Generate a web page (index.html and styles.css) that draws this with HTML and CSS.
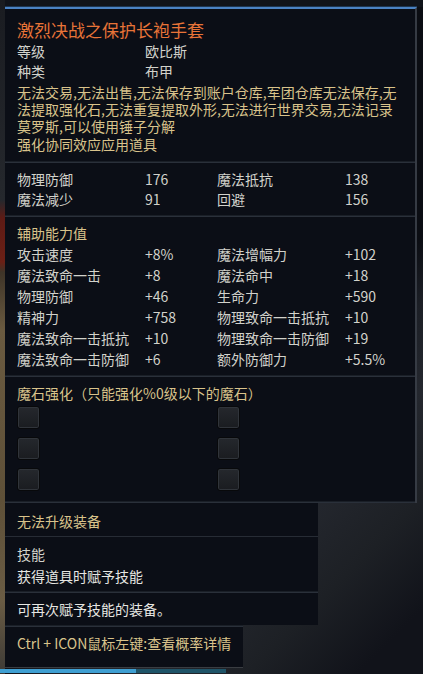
FILE: index.html
```html
<!DOCTYPE html>
<html lang="zh-CN">
<head>
<meta charset="utf-8">
<title>激烈决战之保护长袍手套</title>
<link rel="stylesheet" href="styles.css">
</head>
<body>
<div class="scene">
  <div class="tip">
    <div class="upper">
      <section class="sec sec-head">
        <div class="title">激烈决战之保护长袍手套</div>
        <div class="kv"><span>等级</span><span>欧比斯</span></div>
        <div class="kv"><span>种类</span><span>布甲</span></div>
        <div class="desc gold">
          <div class="dl">无法交易,无法出售,无法保存到账户仓库,军团仓库无法保存,无</div>
          <div class="dl">法提取强化石,无法重复提取外形,无法进行世界交易,无法记录</div>
          <div class="dl">莫罗斯,可以使用锤子分解</div>
        </div>
        <div class="line gold">强化协同效应应用道具</div>
      </section>
      <div class="sep"></div>
      <section class="sec sec-stats">
        <div class="grid4">
          <span>物理防御</span><span>176</span><span>魔法抵抗</span><span>138</span>
          <span>魔法减少</span><span>91</span><span>回避</span><span>156</span>
        </div>
      </section>
      <div class="sep"></div>
      <section class="sec sec-bonus">
        <div class="head gold">辅助能力值</div>
        <div class="grid4 tall">
          <span>攻击速度</span><span>+8%</span><span>魔法增幅力</span><span>+102</span>
          <span>魔法致命一击</span><span>+8</span><span>魔法命中</span><span>+18</span>
          <span>物理防御</span><span>+46</span><span>生命力</span><span>+590</span>
          <span>精神力</span><span>+758</span><span>物理致命一击抵抗</span><span>+10</span>
          <span>魔法致命一击抵抗</span><span>+10</span><span>物理致命一击防御</span><span>+19</span>
          <span>魔法致命一击防御</span><span>+6</span><span>额外防御力</span><span>+5.5%</span>
        </div>
      </section>
      <div class="sep"></div>
      <section class="sec sec-stone">
        <div class="head gold">魔石强化（只能强化%0级以下的魔石）</div>
        <div class="slots">
          <i class="slot"></i><i class="slot"></i>
          <i class="slot"></i><i class="slot"></i>
          <i class="slot"></i><i class="slot"></i>
        </div>
      </section>
      <div class="sep"></div>
    </div>
    <section class="sec sec-up w-mid">
      <div class="line20 gold">无法升级装备</div>
    </section>
    <div class="sep w-mid thin"></div>
    <section class="sec sec-skill w-mid">
      <div class="line22">技能</div>
      <div class="line22 white">获得道具时赋予技能</div>
    </section>
    <div class="sep w-mid"></div>
    <section class="sec sec-re w-mid">
      <div class="line20 white">可再次赋予技能的装备。</div>
    </section>
    <div class="sep w-short"></div>
    <section class="sec sec-ctrl w-short">
      <div class="line20 gold">Ctrl + ICON鼠标左键:查看概率详情</div>
    </section>
  </div>
  <div class="bar"><span class="bar-a"></span><span class="bar-b"></span></div>
</div>
</body>
</html>
```

FILE: styles.css
```css
* { box-sizing: border-box; }

html, body {
  margin: 0;
  padding: 0;
  background: #0b0d13;
}

body {
  font-family: "Noto Sans CJK SC", "Noto Sans", sans-serif;
  font-size: 14px;
  color: #d2d2cb;
}

.scene {
  width: 423px;
  height: 674px;
  overflow: hidden;
  padding-top: 7px;
  background:
    linear-gradient(to bottom, #1a1c21 0, #25282d 200px, #5e1b15 218px, #6b2016 262px, #3e3428 272px, #6a5a40 330px, #5e5038 500px, #6a5c44 600px, #3d3a36 674px) 0 0 / 5px 100% no-repeat,
    linear-gradient(to bottom, #10131a 0, #10131a 7px, transparent 7px) 0 0 / 100% 100% no-repeat,
    linear-gradient(135deg, #0b0d13 0, #0b0d13 60%, #1c1f26 66%, #24272e 74%, #1d2025 84%, #11131a 94%) 0 0 / 100% 100% no-repeat,
    #0b0d13;
}

.tip {
  margin-left: 5px;
  width: 412px;
}

.upper {
  background: #0b0e16;
  border-top: 2px solid #4a82c4;
  border-right: 2px solid #363b44;
  box-shadow: 0 -1px 0 #1d3550;
}

.sec {
  background: #0b0e16;
  padding-left: 12px;
}

.gold { color: #d9c38b; }
.white { color: #e6e6e2; }

.sep {
  height: 2px;
  background: #2a303a;
  border-top: 1px solid #1a1f27;
}
.sep.thin { height: 1px; border-top: 0; background: #272c35; }

.w-mid { width: 313px; }
.w-short { width: 238px; }

/* section 1 */
.sec-head { padding-top: 10px; padding-bottom: 8px; }
.title {
  color: #e87438;
  font-size: 17px;
  line-height: 22px;
}
.kv {
  display: grid;
  grid-template-columns: 128px auto;
  line-height: 20px;
}
.desc {
  margin-top: 3px;
  white-space: nowrap;
}
.dl {
  height: 17px;
  line-height: 17px;
}
.line {
  margin-top: 1px;
  line-height: 17px;
}

/* stat grids */
.grid4 {
  display: grid;
  grid-template-columns: 128px 72px 128px auto;
  line-height: 20px;
  white-space: nowrap;
}
.grid4.tall { line-height: 21px; }

.sec-stats { padding-top: 6px; padding-bottom: 6px; }

.sec-bonus { padding-top: 6px; padding-bottom: 5px; }
.sec-bonus .head { line-height: 21px; }

.sec-stone { padding-top: 6px; padding-bottom: 10px; }
.sec-stone .head { line-height: 20px; white-space: nowrap; }

.slots {
  margin-top: 3px;
  display: grid;
  grid-template-columns: 200px 23px;
  row-gap: 8px;
}
.slot {
  display: block;
  width: 23px;
  height: 23px;
  border-radius: 3px;
  background: linear-gradient(to bottom, #25282d, #1a1c20);
  border: 1px solid #08090b;
  box-shadow: inset 0 0 0 1px #30343a;
}

.line20 { line-height: 20px; white-space: nowrap; }
.line22 { line-height: 22px; white-space: nowrap; }

.sec-up { padding-top: 8px; padding-bottom: 5px; }
.sec-skill { padding-top: 6px; padding-bottom: 4px; }
.sec-re { padding-top: 6px; padding-bottom: 6px; }
.sec-ctrl {
  padding-top: 6px;
  padding-bottom: 14px;
  border-bottom: 1px solid #3a3d42;
}

.bar {
  display: flex;
  margin-top: 1px;
  height: 4px;
}
.bar-a { width: 136px; background: #3f9fd2; }
.bar-b { width: 90px; background: #1f5468; }
```
